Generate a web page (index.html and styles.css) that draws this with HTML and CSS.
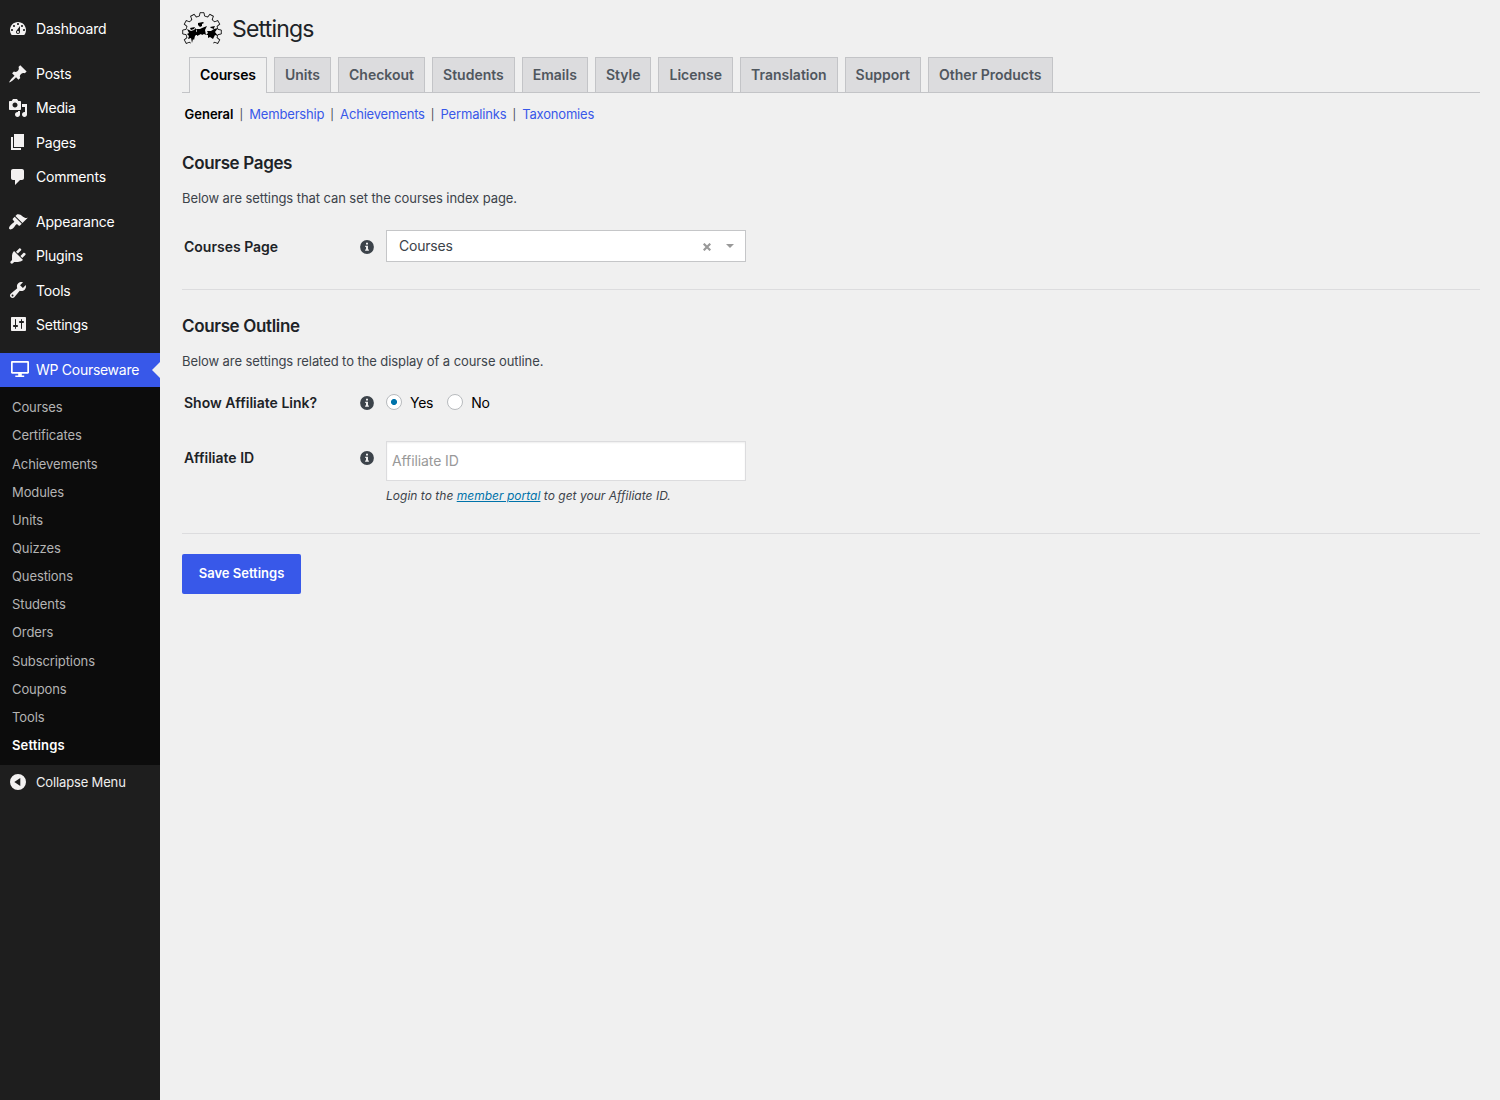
FILE: index.html
```html
<!DOCTYPE html>
<html lang="en">
<head>
    <meta charset="UTF-8">
    <meta name="viewport" content="width=device-width, initial-scale=1.0">
    <title>Settings - WP Courseware</title>
    <link rel="stylesheet" href="styles.css">
</head>
<body>
    <!-- Shared icon shapes -->
    <svg class="defs" width="0" height="0">
        <symbol id="info" viewBox="0 0 14 14">
            <circle cx="7" cy="7" r="6.9" fill="#3c434a"/>
            <path fill="#efefef" d="M6 2.7h2v1.8H6zM5.2 5.7H8v3.7h.9v1.4H5.1V9.4H6V7h-.8z"/>
        </symbol>
        <symbol id="tooth" viewBox="-20 -20 40 40" overflow="visible">
            <path d="M-4.1-15.5L-2.6-15.9L-2-19.3H2L2.6-15.9L4.1-15.5" fill="none" stroke="#111" stroke-width=".9"/>
        </symbol>
    </svg>

    <aside class="sidebar">
        <ul class="menu">
            <li><a href="#"><svg viewBox="0 0 20 20"><path d="M3.76 16h12.48c1.1-1.37 1.76-3.11 1.76-5 0-4.42-3.58-8-8-8s-8 3.58-8 8c0 1.89.66 3.63 1.76 5zM10 4c.55 0 1 .45 1 1s-.45 1-1 1-1-.45-1-1 .45-1 1-1zM6 6c.55 0 1 .45 1 1s-.45 1-1 1-1-.45-1-1 .45-1 1-1zm8 0c.55 0 1 .45 1 1s-.45 1-1 1-1-.45-1-1 .45-1 1-1zm-5.37 5.55L12 7v6c0 1.1-.9 2-2 2s-2-.9-2-2c0-.57.24-1.08.63-1.45zM4 10c.55 0 1 .45 1 1s-.45 1-1 1-1-.45-1-1 .45-1 1-1zm12 0c.55 0 1 .45 1 1s-.45 1-1 1-1-.45-1-1 .45-1 1-1zm-5 3c0-.55-.45-1-1-1s-1 .45-1 1 .45 1 1 1 1-.45 1-1z"/></svg>Dashboard</a></li>
            <li class="separator"></li>
            <li><a href="#"><svg viewBox="0 0 20 20"><path d="M10.44 3.02l1.82-1.82 6.36 6.35-1.83 1.82c-1.05-.68-2.48-.57-3.41.36l-.75.75c-.92.93-1.04 2.35-.35 3.41l-1.83 1.82-2.41-2.41-2.8 2.79c-.42.42-3.38 2.71-3.8 2.29s1.86-3.39 2.28-3.81l2.79-2.79L4.1 9.36l1.83-1.82c1.05.69 2.48.57 3.4-.36l.75-.75c.93-.92 1.05-2.35.36-3.41z"/></svg>Posts</a></li>
            <li><a href="#"><svg viewBox="0 0 20 20"><path d="M13 11V4c0-.55-.45-1-1-1h-1.67L9 1H5L3.67 3H2c-.55 0-1 .45-1 1v7c0 .55.45 1 1 1h10c.55 0 1-.45 1-1zM7 4.5c1.38 0 2.5 1.12 2.5 2.5S8.38 9.5 7 9.5 4.5 8.38 4.5 7 5.62 4.5 7 4.5zM14 6h5v10.5c0 1.38-1.12 2.5-2.5 2.5S14 17.88 14 16.5s1.12-2.5 2.5-2.5c.17 0 .34.02.5.05V9h-3V6zm-4 8.05V13h2v3.5c0 1.38-1.12 2.5-2.5 2.5S7 17.88 7 16.5 8.12 14 9.5 14c.17 0 .34.02.5.05z"/></svg>Media</a></li>
            <li><a href="#"><svg viewBox="0 0 20 20"><path d="M6 15V2h10v13H6zm-1 1h8v2H3V5h2v11z"/></svg>Pages</a></li>
            <li><a href="#"><svg viewBox="0 0 20 20"><path d="M5 2h9c1.1 0 2 .9 2 2v7c0 1.1-.9 2-2 2h-2l-5 5v-5H5c-1.1 0-2-.9-2-2V4c0-1.1.9-2 2-2z"/></svg>Comments</a></li>
            <li class="separator"></li>
            <li><a href="#"><svg viewBox="0 0 20 20"><path d="M14.48 11.06L7.41 3.99l1.5-1.5c.5-.56 2.3-.47 3.51.32 1.21.8 1.43 1.28 2.91 2.1 1.18.64 2.45 1.26 4.45.85zm-.71.71L6.7 4.7 4.93 6.47c-.39.39-.39 1.02 0 1.41l1.06 1.06c.39.39.39 1.03 0 1.42-.6.6-1.43 1.11-2.21 1.69-.35.26-.7.53-1.01.84C1.43 14.23.4 16.08 1.4 17.07c.99 1 2.84-.03 4.18-1.36.31-.31.58-.66.85-1.02.57-.78 1.08-1.61 1.69-2.21.39-.39 1.02-.39 1.41 0l1.06 1.06c.39.39 1.02.39 1.41 0z"/></svg>Appearance</a></li>
            <li><a href="#"><svg viewBox="0 0 20 20"><path d="M13.11 4.36L9.87 7.6 8 5.73l3.24-3.24c.35-.34 1.05-.2 1.56.32.52.51.66 1.21.31 1.55zm-8 1.77l.91-1.12 9.01 9.01-1.19.84c-.71.71-2.63 1.16-3.82 1.16H6.14L4.9 17.26c-.59.59-1.54.59-2.12 0-.59-.58-.59-1.53 0-2.12l1.24-1.24v-3.88c0-1.13.4-3.19 1.09-3.89zm7.26 3.97l3.24-3.24c.34-.35 1.04-.21 1.55.31.52.51.66 1.21.31 1.55l-3.24 3.25z"/></svg>Plugins</a></li>
            <li><a href="#"><svg viewBox="0 0 20 20"><path d="M16.68 9.77c-1.34 1.34-3.3 1.67-4.95.99l-5.41 6.52c-.99.99-2.59.99-3.58 0s-.99-2.59 0-3.57l6.52-5.42c-.68-1.65-.35-3.61.99-4.95 1.28-1.28 3.12-1.62 4.72-1.06l-2.89 2.89 2.82 2.82 2.86-2.87c.53 1.58.18 3.39-1.08 4.65zM3.81 16.21c.4.39 1.04.39 1.43 0 .4-.4.4-1.04 0-1.43-.39-.4-1.03-.4-1.43 0-.39.39-.39 1.03 0 1.43z"/></svg>Tools</a></li>
            <li><a href="#"><svg viewBox="0 0 20 20"><path d="M18 16V4c0-.55-.45-1-1-1H4c-.55 0-1 .45-1 1v12c0 .55.45 1 1 1h13c.55 0 1-.45 1-1zM8 11h1c.55 0 1 .45 1 1s-.45 1-1 1H8v1.5c0 .28-.22.5-.5.5s-.5-.22-.5-.5V13H6c-.55 0-1-.45-1-1s.45-1 1-1h1V5.5c0-.28.22-.5.5-.5s.5.22.5.5V11zm5-2h-1c-.55 0-1-.45-1-1s.45-1 1-1h1V5.5c0-.28.22-.5.5-.5s.5.22.5.5V7h1c.55 0 1 .45 1 1s-.45 1-1 1h-1v5.5c0 .28-.22.5-.5.5s-.5-.22-.5-.5V9z"/></svg>Settings</a></li>
            <li class="separator"></li>
            <li class="current"><a href="#"><svg viewBox="0 0 20 20"><path fill-rule="evenodd" d="M4.2 1h15.6c.7 0 1.2.5 1.2 1.2v10.3c0 .7-.5 1.2-1.2 1.2h-6v1.7h2.4v1.6H7.3v-1.6h2.9v-1.7h-6c-.7 0-1.2-.5-1.2-1.2V2.2C3 1.5 3.5 1 4.2 1zM4.7 2.7V12h14.6V2.7z"/></svg>WP Courseware</a></li>
        </ul>
        <ul class="submenu">
            <li><a href="#">Courses</a></li>
            <li><a href="#">Certificates</a></li>
            <li><a href="#">Achievements</a></li>
            <li><a href="#">Modules</a></li>
            <li><a href="#">Units</a></li>
            <li><a href="#">Quizzes</a></li>
            <li><a href="#">Questions</a></li>
            <li><a href="#">Students</a></li>
            <li><a href="#">Orders</a></li>
            <li><a href="#">Subscriptions</a></li>
            <li><a href="#">Coupons</a></li>
            <li><a href="#">Tools</a></li>
            <li><a href="#" class="active">Settings</a></li>
        </ul>
        <button type="button" class="collapse"><svg viewBox="0 0 20 20"><path fill-rule="evenodd" d="M10 2a8 8 0 1 1 0 16a8 8 0 0 1 0-16zM12.3 5.9L6.3 10l6 4.1z"/></svg>Collapse Menu</button>
    </aside>

    <main class="content">
        <header class="page-header">
            <svg class="logo" viewBox="-20 -20 40 34">
                <use href="#tooth" x="-20" y="-20" width="40" height="40"/>
                <g transform="rotate(30)"><use href="#tooth" x="-20" y="-20" width="40" height="40"/></g>
                <g transform="rotate(60)"><use href="#tooth" x="-20" y="-20" width="40" height="40"/></g>
                <g transform="rotate(90)"><use href="#tooth" x="-20" y="-20" width="40" height="40"/></g>
                <g transform="rotate(120)"><use href="#tooth" x="-20" y="-20" width="40" height="40"/></g>
                <g transform="rotate(-30)"><use href="#tooth" x="-20" y="-20" width="40" height="40"/></g>
                <g transform="rotate(-60)"><use href="#tooth" x="-20" y="-20" width="40" height="40"/></g>
                <g transform="rotate(-90)"><use href="#tooth" x="-20" y="-20" width="40" height="40"/></g>
                <g transform="rotate(-120)"><use href="#tooth" x="-20" y="-20" width="40" height="40"/></g>
                <path d="M-12-4l5-1-1 2-3 1zM-15-3l4 2 3-1 2-2 0 4 3 3-3 0-1 1-1 4-1-1-1 4-1-5-3 1 1-3-2-2 2-1z"/>
                <path d="M-4-9l5-1 1 1-2 1 0 2-2 1-2-2zM-6-3l4 0 2-1 5-2-2 4 1 5-2-1-2 1-1-1-4 2 0-3-2 1 2-3z"/>
                <path d="M8-5l5-1-1 2 0 1-3-1zM5-1l4 0 3-2 4-1-3 4 3 4-3-1-2 4-3-2-2 1 0-3-2 0 2-2z"/>
            </svg>
            <h1>Settings</h1>
        </header>

        <nav class="tabs">
            <a href="#" class="tab active">Courses</a>
            <a href="#" class="tab">Units</a>
            <a href="#" class="tab">Checkout</a>
            <a href="#" class="tab">Students</a>
            <a href="#" class="tab">Emails</a>
            <a href="#" class="tab">Style</a>
            <a href="#" class="tab">License</a>
            <a href="#" class="tab">Translation</a>
            <a href="#" class="tab">Support</a>
            <a href="#" class="tab">Other Products</a>
        </nav>

        <nav class="subtabs">
            <a href="#" class="active">General</a><span>|</span>
            <a href="#">Membership</a><span>|</span>
            <a href="#">Achievements</a><span>|</span>
            <a href="#">Permalinks</a><span>|</span>
            <a href="#">Taxonomies</a>
        </nav>

        <form>
            <section class="section pages">
                <h2>Course Pages</h2>
                <p>Below are settings that can set the courses index page.</p>
                <div class="row">
                    <label>Courses Page</label>
                    <svg class="info"><use href="#info"/></svg>
                    <div class="select">
                        <span>Courses</span>
                        <svg class="clear" viewBox="0 0 8 8"><path d="M.7.7l6.6 6.6M7.3.7L.7 7.3" stroke="#999" stroke-width="2.2"/></svg>
                        <svg class="arrow" viewBox="0 0 8 4"><path d="M0 0h8L4 4z" fill="#999"/></svg>
                    </div>
                </div>
            </section>

            <section class="section outline">
                <h2>Course Outline</h2>
                <p>Below are settings related to the display of a course outline.</p>
                <div class="row radios">
                    <label>Show Affiliate Link?</label>
                    <svg class="info"><use href="#info"/></svg>
                    <label class="radio"><input type="radio" name="affiliate" checked>Yes</label>
                    <label class="radio"><input type="radio" name="affiliate">No</label>
                </div>
                <div class="row affiliate">
                    <label for="affiliate_id">Affiliate ID</label>
                    <svg class="info"><use href="#info"/></svg>
                    <div class="field">
                        <input type="text" id="affiliate_id" placeholder="Affiliate ID">
                        <p class="description">Login to the <a href="#">member portal</a> to get your Affiliate ID.</p>
                    </div>
                </div>
            </section>

            <button type="submit" class="save">Save Settings</button>
        </form>
    </main>
</body>
</html>
```

FILE: styles.css
```css
* {
    box-sizing: border-box;
}

body {
    font-family: Inter, "Liberation Sans", sans-serif;
    font-size: 13px;
    background-color: #f0f0f0;
    color: #3c434a;
    margin: 0;
    display: flex;
    min-height: 100vh;
}

.defs {
    position: absolute;
}

ul {
    list-style: none;
    margin: 0;
    padding: 0;
}

a {
    text-decoration: none;
}

/* Sidebar */
.sidebar {
    width: 160px;
    flex-shrink: 0;
    background-color: #1e1e1e;
    padding-top: 12px;
}

.menu a,
.collapse {
    display: flex;
    align-items: center;
    gap: 8px;
    height: 34.3px;
    padding: 0 0 1px 8px;
    color: #fff;
    font-size: 14px;
    letter-spacing: -0.2px;
    white-space: nowrap;
}

.menu svg,
.collapse svg {
    width: 20px;
    height: 20px;
    fill: #f3f1f1;
    flex-shrink: 0;
    overflow: visible;
}

.separator {
    height: 10.7px;
}

.current {
    position: relative;
    background-color: #3858e9;
}

.menu .current a {
    padding-bottom: 0;
    letter-spacing: -0.28px;
}

.current svg {
    fill: #fff;
}

.current::after {
    content: "";
    position: absolute;
    right: 0;
    top: 9px;
    border: 8px solid transparent;
    border-right-color: #f0f0f0;
    border-left: none;
}

.submenu {
    background-color: #0c0c0c;
    padding: 6.2px 0 5.3px;
}

.submenu a {
    display: block;
    height: 28.17px;
    line-height: 28px;
    padding-left: 12px;
    color: #b4b4b4;
    letter-spacing: -0.1px;
}

.submenu .active {
    color: #fff;
    font-weight: 600;
    letter-spacing: 0.15px;
}

.collapse {
    height: 34px;
    padding-bottom: 0;
    background: none;
    border: none;
    font-family: inherit;
    font-size: 13px;
    letter-spacing: -0.15px;
    color: #eee;
}

/* Content */
.content {
    flex: 1;
    padding: 0 20px 0 22px;
}

.page-header {
    display: flex;
    align-items: center;
    gap: 10px;
    height: 57px;
}

.logo {
    width: 40px;
    height: 34px;
}

h1 {
    margin: 0;
    font-size: 23px;
    font-weight: 400;
    letter-spacing: -0.8px;
    color: #1d2327;
}

.tabs {
    display: flex;
    gap: 7px;
    height: 36px;
    padding-left: 7px;
    border-bottom: 1px solid #c3c4c7;
}

.tab {
    height: 35px;
    padding: 0 10px;
    border: 1px solid #c3c4c7;
    border-bottom: none;
    background-color: #dcdcde;
    color: #50575e;
    font-size: 14px;
    font-weight: 600;
    line-height: 34px;
    white-space: nowrap;
}

.tab.active {
    height: 36px;
    background-color: #f0f0f0;
    color: #000;
    letter-spacing: -0.1px;
}

.subtabs {
    display: flex;
    padding: 13px 0 0 2.5px;
    line-height: 16px;
}

.subtabs a {
    color: #3858e9;
    letter-spacing: -0.18px;
}

.subtabs .active {
    color: #000;
    font-weight: 600;
    letter-spacing: 0;
}

.subtabs span {
    width: 15.8px;
    padding-top: 1px;
    font-size: 11px;
    text-align: center;
}

.section {
    border-bottom: 1px solid #dcdcde;
}

.pages {
    height: 167px;
    padding-top: 29px;
}

.outline {
    height: 244px;
    padding-top: 25px;
}

h2 {
    margin: 0;
    font-size: 17px;
    line-height: 22px;
    font-weight: 600;
    letter-spacing: -0.35px;
    color: #1d2327;
}

.section p {
    margin: 14px 0 0;
    line-height: 20px;
    letter-spacing: -0.08px;
}

.row {
    display: flex;
    align-items: center;
    margin-top: 22px;
    padding-left: 2px;
    font-size: 14px;
}

.row > label:first-child {
    width: 176px;
    font-weight: 600;
    color: #1d2327;
}

.info {
    width: 14px;
    height: 14px;
    margin: 1px 12px 0 0;
}

.select {
    display: flex;
    align-items: center;
    width: 360px;
    height: 32px;
    padding: 0 11px 0 12px;
    background-color: #fff;
    border: 1px solid #c5c6c8;
}

.select span {
    flex: 1;
    padding-bottom: 1px;
    letter-spacing: -0.2px;
}

.clear {
    width: 8px;
    height: 8px;
    margin: 1px 15.5px 0 0;
}

.arrow {
    width: 8px;
    height: 4px;
    margin-bottom: 1px;
}

.radios {
    height: 18px;
}

.row .radio {
    display: flex;
    align-items: center;
    margin-right: 14px;
    color: #000;
    letter-spacing: -0.25px;
}

input[type="radio"] {
    appearance: none;
    width: 16px;
    height: 16px;
    margin: 0 8px 0 0;
    border: 1px solid #b8bbbe;
    border-radius: 50%;
    background: #fff;
}

input[type="radio"]:checked {
    background: radial-gradient(circle, #0073aa 2.7px, #fff 3.3px);
}

.affiliate {
    align-items: flex-start;
    margin-top: 30px;
}

.affiliate > label {
    margin-top: 8px;
}

.affiliate > .info {
    margin-top: 10px;
}

.field {
    width: 360px;
}

input[type="text"] {
    display: block;
    width: 100%;
    height: 40px;
    padding: 0 5px 1px;
    border: 1px solid #dcdcde;
    box-shadow: inset 0 1px 2px rgba(0, 0, 0, 0.07);
    font-family: inherit;
    font-size: 14px;
    letter-spacing: -0.1px;
}

input::placeholder {
    color: #999;
}

.field .description {
    margin-top: 5px;
    font-size: 12px;
    font-style: italic;
    letter-spacing: 0.02px;
}

.description a {
    color: #0073aa;
    text-decoration: underline;
}

.save {
    display: block;
    width: 119px;
    height: 40px;
    margin-top: 20px;
    padding: 0 0 2px;
    border: none;
    border-radius: 2px;
    background-color: #3858e9;
    color: #fff;
    font-family: inherit;
    font-size: 13px;
    font-weight: 600;
}
```
